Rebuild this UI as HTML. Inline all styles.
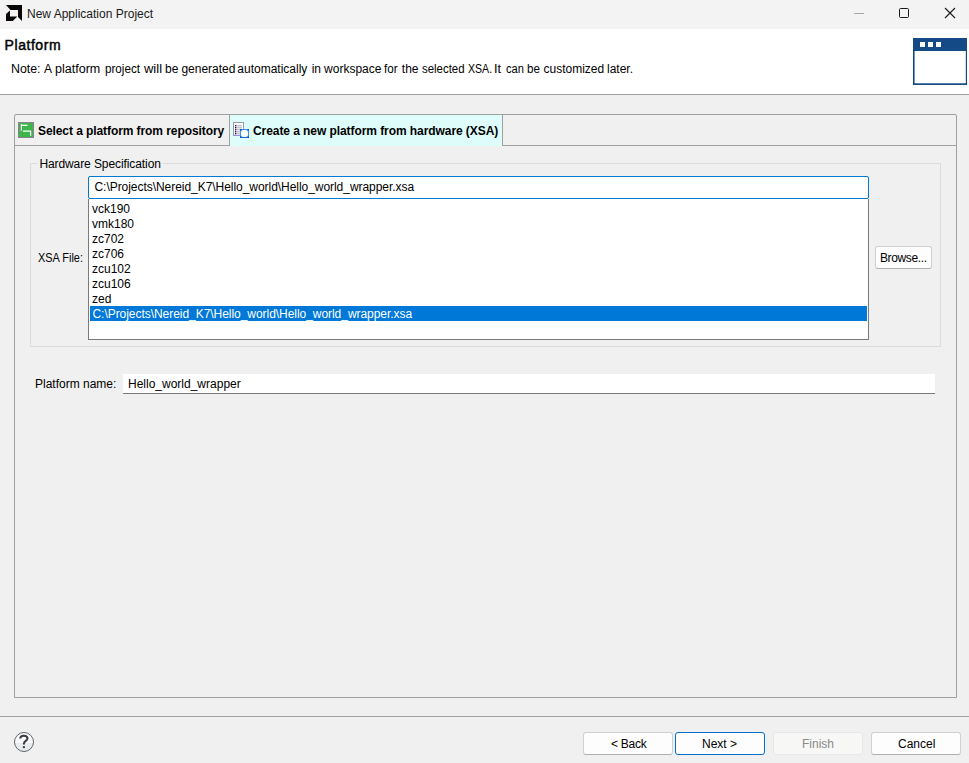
<!DOCTYPE html>
<html><head><meta charset="utf-8">
<style>
html,body{margin:0;padding:0;}
body{width:969px;height:763px;position:relative;overflow:hidden;background:#f0f0f0;font-family:"Liberation Sans",sans-serif;font-size:12px;color:#000;}
.a{position:absolute;}
.t{position:absolute;white-space:nowrap;line-height:15px;margin-top:1px;}
</style></head><body>
<!-- title bar -->
<div class="a" style="left:0;top:0;width:969px;height:29px;background:#f3f3f3;"></div>
<svg class="a" style="left:6px;top:5px" width="16" height="16" viewBox="0 0 16 16">
 <polygon points="0,0 16,0 16,16 12,12 12,5 4.5,5" fill="#0a0506"/>
 <polygon points="0,9 4,5.5 4,11.5 11.3,11.5 6.8,16 0,16" fill="#0a0506"/>
</svg>
<div class="t" style="left:27px;top:6px;color:#1a1a1a;">New Application Project</div>
<div class="a" style="left:854px;top:13px;width:10px;height:1px;background:#a6a6b0;"></div>
<div class="a" style="left:899px;top:8px;width:8px;height:8px;border:1px solid #1a1a1a;border-radius:1.5px;"></div>
<svg class="a" style="left:944px;top:7px" width="12" height="12" viewBox="0 0 12 12">
 <path d="M1,1 L11,11 M11,1 L1,11" stroke="#1a1a1a" stroke-width="1.1" fill="none"/>
</svg>

<!-- header -->
<div class="a" style="left:0;top:29px;width:969px;height:65px;background:#fff;"></div>
<div class="a" style="left:0;top:94px;width:969px;height:1px;background:#a0a0a0;"></div>
<div class="t" style="left:4.6px;top:36px;font-size:14px;line-height:16px;letter-spacing:0.55px;-webkit-text-stroke:0.45px #000;">Platform</div>
<div class="a" style="left:0;top:0;"><div class="t" style="left:11.2px;top:61px;transform:scaleX(1.030);transform-origin:1px 0;">Note:</div><div class="t" style="left:44.0px;top:61px;">A</div><div class="t" style="left:55.3px;top:61px;transform:scaleX(1.044);transform-origin:0px 0;">platform</div><div class="t" style="left:105.3px;top:61px;transform:scaleX(0.972);transform-origin:0px 0;">project</div><div class="t" style="left:143.9px;top:61px;transform:scaleX(1.081);transform-origin:0px 0;">will</div><div class="t" style="left:165.0px;top:61px;">be</div><div class="t" style="left:181.4px;top:61px;">generated</div><div class="t" style="left:237.3px;top:61px;">automatically</div><div class="t" style="left:311.7px;top:61px;">in</div><div class="t" style="left:324.1px;top:61px;">workspace</div><div class="t" style="left:384.2px;top:61px;transform:scaleX(0.971);transform-origin:0px 0;">for</div><div class="t" style="left:401.8px;top:61px;">the</div><div class="t" style="left:422.2px;top:61px;transform:scaleX(0.952);transform-origin:0px 0;">selected</div><div class="t" style="left:468.1px;top:61px;transform:scaleX(0.880);transform-origin:0px 0;">XSA.</div><div class="t" style="left:494.3px;top:61px;transform:scaleX(1.050);transform-origin:1px 0;">It</div><div class="t" style="left:505.5px;top:61px;transform:scaleX(0.926);transform-origin:0px 0;">can</div><div class="t" style="left:527.3px;top:61px;transform:scaleX(0.969);transform-origin:0px 0;">be</div><div class="t" style="left:543.5px;top:61px;">customized</div><div class="t" style="left:607.0px;top:61px;">later.</div></div>
<svg class="a" style="left:913px;top:38px" width="54" height="47" viewBox="0 0 54 47">
 <rect x="0" y="0" width="54" height="47" fill="#144a85"/>
 <rect x="1.6" y="13" width="51.2" height="32.3" fill="#fff"/>
 <rect x="7" y="4" width="5" height="5" fill="#fff"/>
 <rect x="15" y="4" width="5" height="5" fill="#fff"/>
 <rect x="23" y="4" width="5" height="5" fill="#fff"/>
</svg>

<!-- tab folder -->
<div class="a" style="left:14px;top:114px;width:941px;height:582px;border:1px solid #a0a0a0;border-radius:2px 2px 0 0;"></div>
<div class="a" style="left:15px;top:145px;width:941px;height:1px;background:#a0a0a0;"></div>
<div class="a" style="left:229px;top:115px;width:1px;height:30px;background:#a0a0a0;"></div>
<div class="a" style="left:230px;top:115px;width:272px;height:31px;background:#defcf9;"></div>
<div class="a" style="left:502px;top:115px;width:1px;height:30px;background:#a0a0a0;"></div>
<svg class="a" style="left:18px;top:122px" width="16" height="16" viewBox="0 0 16 16">
 <rect x="0.5" y="0.5" width="15" height="15" fill="#3db54a" stroke="#8c828c"/>
 <path d="M3.4,2 V8.8 M3.4,3.4 H9.5 M5,9.2 H12.6 V13.8" stroke="#fff" stroke-width="1.2" fill="none"/>
</svg>
<div class="t" style="left:38px;top:123px;font-weight:bold;letter-spacing:-0.08px;">Select a platform from repository</div>
<svg class="a" style="left:233px;top:122px" width="17" height="17" viewBox="0 0 17 17">
 <rect x="0.5" y="0.5" width="10" height="13" fill="#fff" stroke="#9a9aa6"/>
 <rect x="1" y="13" width="9" height="1" fill="#9a90e0"/>
 <g fill="#2a0a5a"><rect x="2" y="3" width="1.4" height="1.4"/><rect x="2" y="5" width="1.4" height="1.4"/><rect x="2" y="7" width="1.4" height="1.4"/><rect x="2" y="9" width="1.4" height="1.4"/><rect x="2" y="11" width="1.4" height="1.4"/></g>
 <g fill="#a8a8b8"><rect x="4" y="3.3" width="5" height="1"/><rect x="4" y="5.3" width="5" height="1"/><rect x="4" y="7.3" width="5" height="1"/><rect x="4" y="9.3" width="5" height="1"/><rect x="4" y="11.3" width="5" height="1"/></g>
 <rect x="7" y="7" width="9" height="9" fill="#3f95ee"/><rect x="8" y="8" width="7" height="7" rx="2.2" fill="#fff"/><g fill="#0b4fb5"><rect x="7" y="7" width="1.5" height="1.5"/><rect x="14.5" y="7" width="1.5" height="1.5"/><rect x="7" y="14.5" width="1.5" height="1.5"/><rect x="14.5" y="14.5" width="1.5" height="1.5"/></g><rect x="8" y="15" width="7" height="1" fill="#1a6ad8"/>
</svg>
<div class="t" style="left:253px;top:123px;font-weight:bold;letter-spacing:-0.07px;">Create a new platform from hardware (XSA)</div>

<!-- group box -->
<div class="a" style="left:30px;top:163px;width:909px;height:182px;border:1px solid #dcdcdc;"></div>
<div class="a" style="left:37px;top:158px;width:126px;height:10px;background:#f0f0f0;"></div>
<div class="t" style="left:39.4px;top:156px;letter-spacing:-0.09px;">Hardware Specification</div>

<!-- xsa field -->
<div class="a" style="left:88px;top:176px;width:779px;height:21px;border:1px solid #0078d4;border-radius:2px;background:#fff;"></div>
<div class="t" style="left:94.5px;top:179px;letter-spacing:-0.045px;">C:\Projects\Nereid_K7\Hello_world\Hello_world_wrapper.xsa</div>
<!-- list -->
<div class="a" style="left:88px;top:199px;width:779px;height:140px;border:1px solid #7a7a7a;border-top:none;background:#fff;"></div>
<div class="a" style="left:90px;top:306px;width:777px;height:15px;background:#0078d7;"></div>
<div class="t" style="left:92px;top:201px;">vck190</div>
<div class="t" style="left:92px;top:216px;">vmk180</div>
<div class="t" style="left:92px;top:231px;">zc702</div>
<div class="t" style="left:92px;top:246px;">zc706</div>
<div class="t" style="left:92px;top:261px;">zcu102</div>
<div class="t" style="left:92px;top:276px;">zcu106</div>
<div class="t" style="left:92px;top:291px;">zed</div>
<div class="t" style="left:92.5px;top:306px;color:#fff;letter-spacing:-0.045px;">C:\Projects\Nereid_K7\Hello_world\Hello_world_wrapper.xsa</div>

<div class="t" style="left:38px;top:250px;transform:scaleX(0.91);transform-origin:0 0;">XSA File:</div>
<div class="a" style="left:875px;top:246px;width:55px;height:21px;border:1px solid #d0d0d0;border-bottom-color:#b0b0b0;border-radius:3px;background:#fdfdfd;"></div>
<div class="t" style="left:880px;top:250px;letter-spacing:-0.38px;">Browse...</div>

<!-- platform name -->
<div class="t" style="left:35px;top:376px;">Platform name:</div>
<div class="a" style="left:123px;top:374px;width:812px;height:19px;border-bottom:1px solid #7a7a7a;background:#fff;"></div>
<div class="t" style="left:128px;top:376px;">Hello_world_wrapper</div>

<!-- bottom -->
<div class="a" style="left:0;top:716px;width:969px;height:1px;background:#a0a0a0;"></div>
<svg class="a" style="left:13px;top:731px" width="22" height="22" viewBox="0 0 22 22">
 <defs><linearGradient id="hg" x1="0" y1="0" x2="0" y2="1"><stop offset="0.55" stop-color="#f8f9fa"/><stop offset="0.55" stop-color="#e8ebee"/></linearGradient></defs>
 <circle cx="11" cy="11" r="9.5" fill="url(#hg)" stroke="#60646c" stroke-width="1"/>
 <path d="M7.2,7.6 C7.2,5.6 8.9,4.7 10.9,4.7 C13.1,4.7 14.5,5.9 14.5,7.5 C14.5,9.6 10.9,10.2 10.9,12.5 V13.6" stroke="#3a3a42" stroke-width="2" fill="none"/>
 <circle cx="10.9" cy="16.2" r="1.15" fill="#3a3a42"/>
</svg>

<div class="a" style="left:583px;top:732px;width:88px;height:21px;border:1px solid #d0d0d0;border-bottom-color:#b0b0b0;border-radius:3px;background:#fdfdfd;"></div>
<div class="t" style="left:611px;top:736px;letter-spacing:-0.25px;">&lt; Back</div>
<div class="a" style="left:675px;top:732px;width:88px;height:21px;border:1px solid #0070cc;border-radius:3px;background:#fdfdfd;"></div>
<div class="t" style="left:702px;top:736px;">Next &gt;</div>
<div class="a" style="left:773px;top:732px;width:88px;height:21px;border:1px solid #e6e6e6;border-radius:3px;background:#f7f7f5;"></div>
<div class="t" style="left:802px;top:736px;color:#8a8a8a;">Finish</div>
<div class="a" style="left:871px;top:732px;width:88px;height:21px;border:1px solid #d0d0d0;border-bottom-color:#b0b0b0;border-radius:3px;background:#fdfdfd;"></div>
<div class="t" style="left:898px;top:736px;">Cancel</div>
</body></html>
